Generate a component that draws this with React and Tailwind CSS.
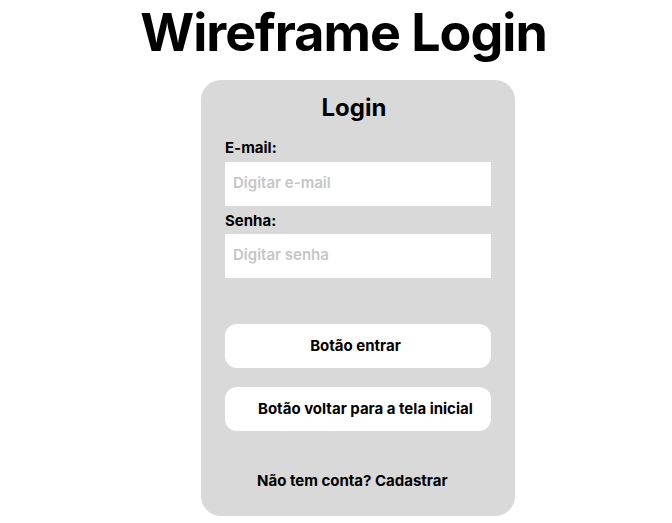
export default function App() {
  return (
    <div className="w-[672px] h-[523px] bg-white overflow-hidden" style={{ fontFamily: "Inter, 'Liberation Sans', sans-serif" }}>
      <h1 className="pl-[15px] pt-[3px] text-center text-[52px] leading-[60px] font-bold text-black tracking-[-1px]">Wireframe Login</h1>
      <div className="ml-[201px] mt-[17px] w-[314px] h-[436px] rounded-[20px] bg-[#d9d9d9] px-[24px] pt-[13px] flex flex-col">
        <h2 className="pr-[8px] text-center text-[24px] leading-[30px] font-bold text-black">Login</h2>
        <label className="mt-[16px] text-[15px] leading-[18px] font-bold text-black">E-mail:</label>
        <div className="mt-[5px] h-[44px] bg-white flex items-center px-[8px] pb-[2px] text-[15px] font-semibold text-[#c6c6c6]">Digitar e-mail</div>
        <label className="mt-[6px] text-[15px] leading-[18px] font-bold text-black">Senha:</label>
        <div className="mt-[4px] h-[44px] bg-white flex items-center px-[8px] pb-[2px] text-[15px] font-semibold text-[#c6c6c6]">Digitar senha</div>
        <div className="mt-[46px] h-[44px] bg-white rounded-[12px] flex items-center justify-center pr-[5px] text-[15px] font-bold text-black">Botão entrar</div>
        <div className="mt-[19px] h-[44px] bg-white rounded-[12px] flex items-center pl-[33px] text-[15px] font-bold text-black">Botão voltar para a tela inicial</div>
        <div className="mt-[41px] pl-[32px] text-[15px] leading-[18px] font-bold text-black">Não tem conta? Cadastrar</div>
      </div>
    </div>
  );
}
